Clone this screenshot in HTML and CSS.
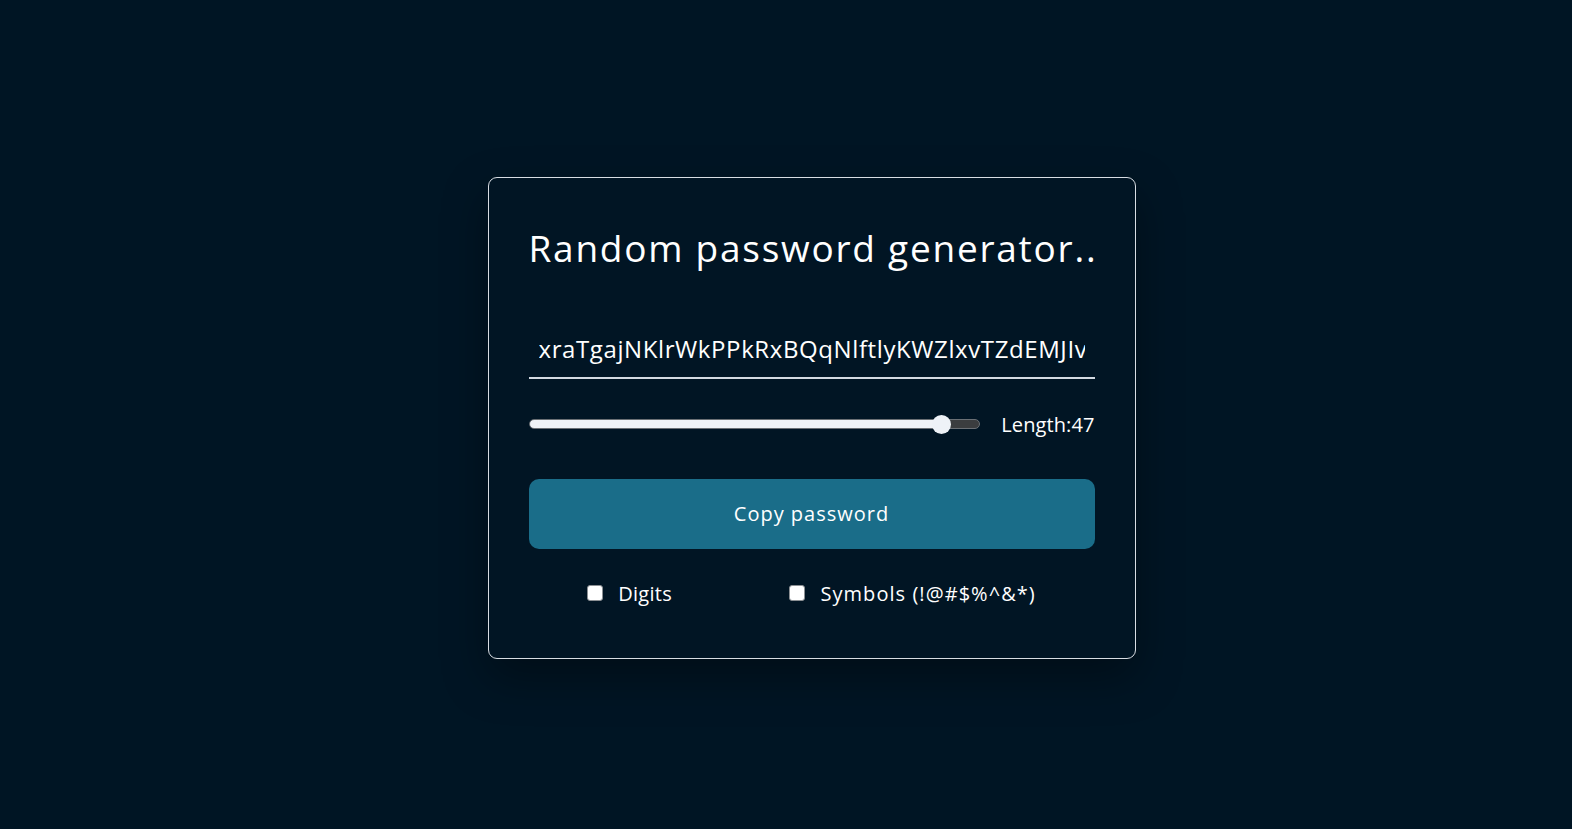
FILE: index.html
```html
<!DOCTYPE html>
<html lang="en">
<head>
<meta charset="utf-8">
<title>Random password generator</title>
<link rel="stylesheet" href="styles.css">
</head>
<body>
  <main class="page">
    <section class="card">
      <h1 class="title">Random password generator..</h1>
      <input class="password" type="text" readonly value="xraTgajNKlrWkPPkRxBQqNlftlyKWZlxvTZdEMJIvUoQbNxyHaTq">
      <div class="length-row">
        <input class="slider" type="range" min="5" max="50" value="47" style="--fill: 91.6%">
        <span class="length-label">Length:47</span>
      </div>
      <button class="copy-btn">Copy password</button>
      <div class="options">
        <label class="option option-digits"><input type="checkbox" class="check"><span>Digits</span></label>
        <label class="option option-symbols"><input type="checkbox" class="check"><span>Symbols (!@#$%^&amp;*)</span></label>
      </div>
    </section>
  </main>
</body>
</html>
```
FILE: styles.css
```css
* { box-sizing: border-box; }
html, body { margin: 0; height: 100%; }
body {
  background: #001524;
  font-family: "Open Sans", "Noto Sans", sans-serif;
  color: #ffffff;
}
.page {
  height: 100%;
  display: flex;
  align-items: center;
  justify-content: center;
  padding: 6px 0 0 51px;
}
.card {
  width: 648px;
  border: 1px solid #d8dde3;
  border-radius: 9px;
  padding: 43px 40px 51px 40px;
  background: #011524;
  box-shadow: 0 18px 45px rgba(0, 0, 0, 0.35);
}
.title {
  margin: 0 0 50px 0;
  font-size: 37px;
  font-weight: 400;
  line-height: 54px;
  letter-spacing: 1.75px;
  white-space: nowrap;
}
.password {
  display: block;
  width: 100%;
  background: transparent;
  border: none;
  border-bottom: 2px solid #d3d9e1;
  color: #ffffff;
  font-family: inherit;
  font-size: 24px;
  letter-spacing: 0.6px;
  line-height: 32px;
  height: 54px;
  padding: 8px 10px 12px 10px;
  outline: none;
}
.length-row {
  display: flex;
  align-items: center;
  gap: 21px;
  margin-top: 32px;
}
.slider {
  -webkit-appearance: none;
  appearance: none;
  flex: 1;
  height: 10px;
  margin: 0;
  border-radius: 5px;
  border: 1px solid #6a6f74;
  background: linear-gradient(to right, #f0f3f7 var(--fill), #3b3d3f var(--fill));
}
.slider::-webkit-slider-thumb {
  -webkit-appearance: none;
  width: 19px;
  height: 19px;
  border-radius: 50%;
  background: #eef2f7;
  border: none;
}
.length-label {
  font-size: 20px;
  line-height: 27px;
  letter-spacing: 0.1px;
}
.copy-btn {
  display: block;
  width: 100%;
  height: 70px;
  margin-top: 41px;
  border: none;
  border-radius: 10px;
  background: #1a6d89;
  color: #ffffff;
  font-family: inherit;
  font-size: 20px;
  letter-spacing: 1px;
  cursor: pointer;
}
.options {
  display: flex;
  justify-content: space-around;
  margin-top: 31px;
}
.option {
  display: flex;
  align-items: center;
  gap: 15px;
  font-size: 20px;
  line-height: 27px;
}
.option-digits { letter-spacing: 0.3px; }
.option-symbols { letter-spacing: 1.05px; }
.check {
  -webkit-appearance: none;
  appearance: none;
  margin: 0;
  width: 16px;
  height: 16px;
  background: #ffffff;
  border: 1.5px solid #8b8f93;
  border-radius: 3px;
}
```
